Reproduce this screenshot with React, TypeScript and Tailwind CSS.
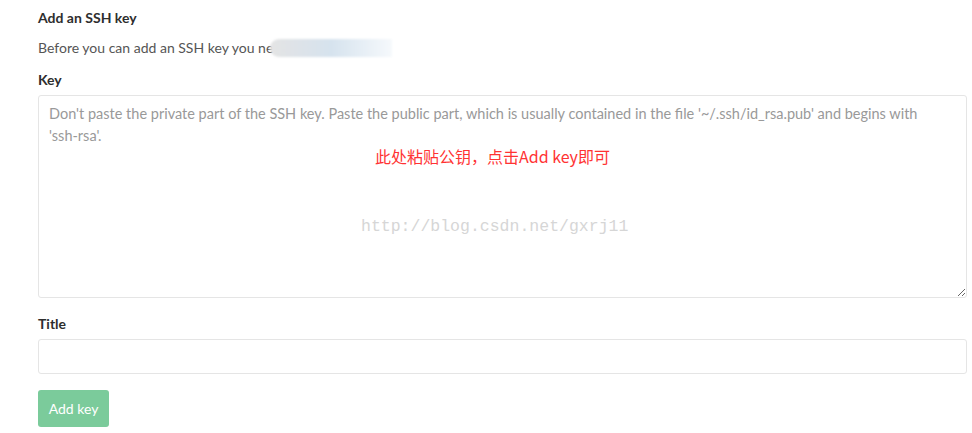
import React from "react";

export default function App() {
  return (
    <div
      className="w-[972px] h-[433px] bg-white overflow-hidden pl-[38px] pr-[5px] pt-[8px] flex flex-col items-start text-[14px] text-[#333]"
      style={{ fontFamily: "Lato, 'Open Sans', sans-serif" }}
    >
      <h4 className="font-bold text-[14px] leading-[20px] text-[#2e2e2e]">Add an SSH key</h4>
      <div className="relative mt-[10px] leading-[20px] text-[#555] h-[20px]">
        <span>Before you can add an SSH key you ne</span>
        <div className="absolute left-[232px] top-[1px] w-[122px] h-[18px] rounded-l-full bg-gradient-to-r from-[#e4e4e4] via-[#d6e3ee] to-[#f6f9fc] blur-[1px]" />
      </div>
      <label className="block font-bold mt-[12px] leading-[20px] text-[#2e2e2e]">Key</label>
      <div className="relative mt-[5px] self-stretch">
        <textarea
          className="block w-full h-[203px] border border-[#e5e5e5] rounded-[3px] px-[10px] pt-[7px] leading-[22px] text-[14.5px] text-[#555] placeholder:text-[#999] outline-none"
          style={{ fontFamily: "Lato, 'Open Sans', sans-serif" }}
          placeholder={"Don't paste the private part of the SSH key. Paste the public part, which is usually contained in the file '~/.ssh/id_rsa.pub' and begins with\n'ssh-rsa'."}
        />
        <div
          className="absolute left-[337px] top-[51px] text-[16px] leading-[20px] text-[#ff3333] whitespace-nowrap pointer-events-none"
          style={{ fontFamily: "'Noto Sans CJK SC', sans-serif" }}
        >
          此处粘贴公钥，点击Add key即可
        </div>
        <div
          className="absolute left-[323px] top-[122px] text-[16.5px] leading-[20px] text-[#d6d6d6] whitespace-nowrap pointer-events-none"
          style={{ fontFamily: "'Liberation Mono', monospace" }}
        >
          http://blog.csdn.net/gxrj11
        </div>
      </div>
      <label className="block font-bold mt-[16px] leading-[20px] text-[#2e2e2e]">Title</label>
      <input
        className="block self-stretch mt-[5px] h-[35px] border border-[#e5e5e5] rounded-[3px] px-[10px] outline-none"
        type="text"
      />
      <button className="mt-[16px] h-[37px] w-[71px] rounded-[3px] bg-[#7bcb9b] text-white text-[14px]">
        Add key
      </button>
    </div>
  );
}
